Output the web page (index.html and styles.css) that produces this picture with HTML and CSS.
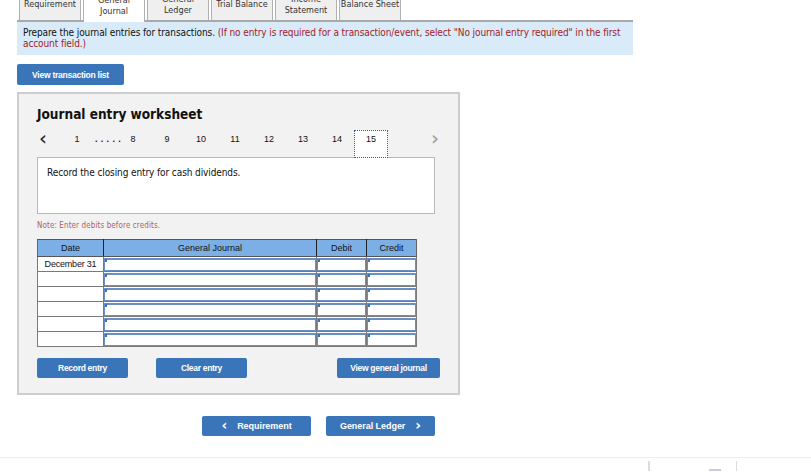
FILE: index.html
```html
<!DOCTYPE html>
<html>
<head>
<meta charset="utf-8">
<link rel="stylesheet" href="styles.css">
</head>
<body>
<div class="tabs">
  <div class="tab">Requirement</div>
  <div class="tab active">General<br>Journal</div>
  <div class="tab">General<br>Ledger</div>
  <div class="tab">Trial Balance</div>
  <div class="tab">Income<br>Statement</div>
  <div class="tab">Balance Sheet</div>
</div>
<div class="info"><div class="line">Prepare the journal entries for transactions. <span class="warn">(If no entry is required for a transaction/event, select "No journal entry required" in the first</span></div><div class="line warn">account field.)</div></div>
<button class="btn txbtn">View transaction list</button>
<div class="panel">
  <h2 class="title">Journal entry worksheet</h2>
  <div class="pager">
    <span class="arrow left">&#8249;</span>
    <span class="pg first">1</span>
    <span class="dots">.....</span>
    <span class="pg">8</span>
    <span class="pg">9</span>
    <span class="pg">10</span>
    <span class="pg">11</span>
    <span class="pg">12</span>
    <span class="pg">13</span>
    <span class="pg">14</span>
    <span class="pg cur">15</span>
    <span class="arrow right">&#8250;</span>
  </div>
  <div class="prompt">Record the closing entry for cash dividends.</div>
  <div class="note">Note: Enter debits before credits.</div>
  <table class="jt">
    <thead>
      <tr><th class="c-date">Date</th><th class="c-acc">General Journal</th><th class="c-num">Debit</th><th class="c-num">Credit</th></tr>
    </thead>
    <tbody>
      <tr><td class="d">December 31</td><td><div class="inp"></div></td><td><div class="inp"></div></td><td><div class="inp"></div></td></tr>
      <tr><td class="d"></td><td><div class="inp"></div></td><td><div class="inp"></div></td><td><div class="inp"></div></td></tr>
      <tr><td class="d"></td><td><div class="inp"></div></td><td><div class="inp"></div></td><td><div class="inp"></div></td></tr>
      <tr><td class="d"></td><td><div class="inp"></div></td><td><div class="inp"></div></td><td><div class="inp"></div></td></tr>
      <tr><td class="d"></td><td><div class="inp"></div></td><td><div class="inp"></div></td><td><div class="inp"></div></td></tr>
      <tr><td class="d"></td><td><div class="inp"></div></td><td><div class="inp"></div></td><td><div class="inp"></div></td></tr>
    </tbody>
  </table>
  <div class="actions">
    <button class="btn act rec">Record entry</button>
    <button class="btn act clr">Clear entry</button>
    <button class="btn act vgj">View general journal</button>
  </div>
</div>
<div class="nav">
  <button class="btn navbtn"><span class="chev">&#8249;</span>Requirement</button>
  <button class="btn navbtn">General Ledger<span class="chev r">&#8250;</span></button>
</div>
<div class="footer">
  <div class="fcell w1"></div>
  <div class="fcell w2"><span class="fmark"></span></div>
  <div class="fcell w3"></div>
</div>
</body>
</html>
```
FILE: styles.css
```css
html, body {
  margin: 0;
  padding: 0;
  background: #fff;
  overflow: hidden;
}
body {
  width: 811px;
  height: 472px;
  font-family: "DejaVu Sans Condensed", "DejaVu Sans", sans-serif;
  color: #111;
}
.tabs {
  display: flex;
  gap: 2px;
  margin: -14px 0 0 19px;
  height: 34px;
  position: relative;
  z-index: 1;
}
.tab {
  width: 62px;
  border: 1px solid #b0b0b0;
  border-bottom: none;
  background: #efefef;
  font-size: 9px;
  line-height: 11px;
  color: #333;
  display: flex;
  align-items: center;
  justify-content: center;
  text-align: center;
  white-space: nowrap;
  padding-top: 2px;
  box-sizing: border-box;
  height: 34px;
}
.tab.active {
  background: #fff;
  height: 36px;
}
.info {
  margin-left: 17px;
  width: 604px;
  border-top: 2px solid #a9a9a9;
  background: #d9ebf9;
  padding: 5px 6px 6px 6px;
  font-size: 10px;
  line-height: 11px;
  letter-spacing: -0.1px;
  color: #111;
  height: 22px;
}
.line { white-space: nowrap; height: 11px; }
.warn { color: #a3202a; }
.btn {
  border: none;
  border-radius: 2px;
  background: #3a75ba;
  color: #fff;
  font-family: "Liberation Sans", Arial, sans-serif;
  font-weight: bold;
  padding: 0;
  display: flex;
  align-items: center;
  justify-content: center;
}
.txbtn {
  margin: 9px 0 0 17px;
  width: 107px;
  height: 21px;
  font-size: 8.5px;
  letter-spacing: -0.25px;
}
.panel {
  margin: 7px 0 0 17px;
  width: 443px;
  height: 303px;
  box-sizing: border-box;
  background: #f2f2f2;
  border: 2px solid #cdcdcd;
  padding: 0 0 0 18px;
}
.title {
  margin: 12px 0 0 0;
  font-size: 13.5px;
  line-height: 16px;
  font-weight: bold;
  letter-spacing: 0;
  color: #111;
}
.pager {
  display: flex;
  align-items: flex-start;
  height: 28px;
  margin-top: 8px;
  font-family: "Liberation Sans", Arial, sans-serif;
  font-size: 9px;
  line-height: 10px;
  color: #111;
}
.pg {
  width: 34px;
  text-align: center;
  flex: none;
  padding-top: 4px;
}
.arrow {
  font-size: 20px;
  line-height: 20px;
  width: 10px;
  flex: none;
  margin-top: -2px;
  font-family: "DejaVu Sans", sans-serif;
}
.arrow.left { margin-left: 2px; color: #222; }
.arrow.right { color: #999; margin-left: 43px; }
.pg.first { width: 30px; margin-left: 13px; }
.dots {
  width: 23px;
  flex: none;
  white-space: nowrap;
  letter-spacing: 3.3px;
  font-weight: bold;
  padding-top: 4px;
  margin-left: 3px;
  margin-right: -2px;
}
.pg.cur {
  width: 34px;
  height: 28px;
  box-sizing: border-box;
  border: 1px dotted #2f5f9f;
  background: #fff;
  padding-top: 3px;
  position: relative;
}
.prompt {
  width: 398px;
  height: 57px;
  box-sizing: border-box;
  background: #fff;
  border: 1px solid #b8b8b8;
  padding: 9px 9px;
  font-size: 10px;
  letter-spacing: -0.1px;
  color: #111;
  margin-top: -1px;
}
.note {
  margin-top: 7px;
  font-size: 8px;
  color: #b45d60;
  letter-spacing: 0.1px;
  height: 10px;
  line-height: 10px;
}
.jt {
  margin-top: 8px;
  border-collapse: collapse;
  font-family: "Liberation Sans", Arial, sans-serif;
  font-size: 9px;
  table-layout: fixed;
  width: 379px;
}
.jt th {
  background: #7cafe6;
  height: 17px;
  padding: 0;
  font-weight: normal;
  color: #111;
  border: 1px solid #555;
  border-left: 1px solid #222;
  border-right: 1px solid #222;
  box-sizing: border-box;
}
.jt th:first-child { border-left: 1px solid #666; }
.jt th:last-child { border-right: 1px solid #666; }
.c-date { width: 66px; }
.c-acc { width: 213px; }
.c-num { width: 50px; }
.jt td {
  height: 15px;
  padding: 0;
  border: 1px solid #7a7a7a;
  background: #fff;
  box-sizing: border-box;
}
.jt td.d {
  text-align: center;
  color: #111;
  letter-spacing: -0.2px;
  vertical-align: middle;
}
.inp {
  height: 13px;
  border: 1px solid #6a8fc5;
  border-top-width: 2px;
  box-sizing: border-box;
  position: relative;
  background: #fff;
}
.inp::before {
  content: "";
  position: absolute;
  left: 0;
  top: -1px;
  width: 2px;
  height: 3px;
  background: #3a75ba;
}
.actions {
  display: flex;
  margin-top: 11px;
}
.act {
  height: 20px;
  font-size: 8.5px;
  letter-spacing: -0.3px;
}
.rec { width: 91px; }
.clr { width: 91px; margin-left: 28px; }
.vgj { width: 103px; margin-left: 90px; }
.nav {
  display: flex;
  gap: 15px;
  margin: 21px 0 0 202px;
}
.navbtn {
  width: 109px;
  height: 20px;
  font-size: 9px;
  letter-spacing: -0.05px;
}
.chev {
  font-size: 14px;
  line-height: 14px;
  margin: -2px 10px 0 0;
  font-family: "DejaVu Sans", sans-serif;
  font-weight: bold;
}
.chev.r { margin: -2px 0 0 10px; }
.footer {
  margin-top: 21px;
  border-top: 1px solid #ececec;
  height: 14px;
  display: flex;
  padding-left: 648px;
  box-sizing: border-box;
}
.fcell {
  height: 10px;
  margin-top: 3px;
  border-left: 1px solid #dcdcdc;
}
.w1 { width: 0; }
.w2 { width: 86px; position: relative; }
.w3 { width: 65px; }
.fmark {
  position: absolute;
  left: 59px;
  top: 8px;
  width: 12px;
  height: 2px;
  background: #c9c9df;
}
```
